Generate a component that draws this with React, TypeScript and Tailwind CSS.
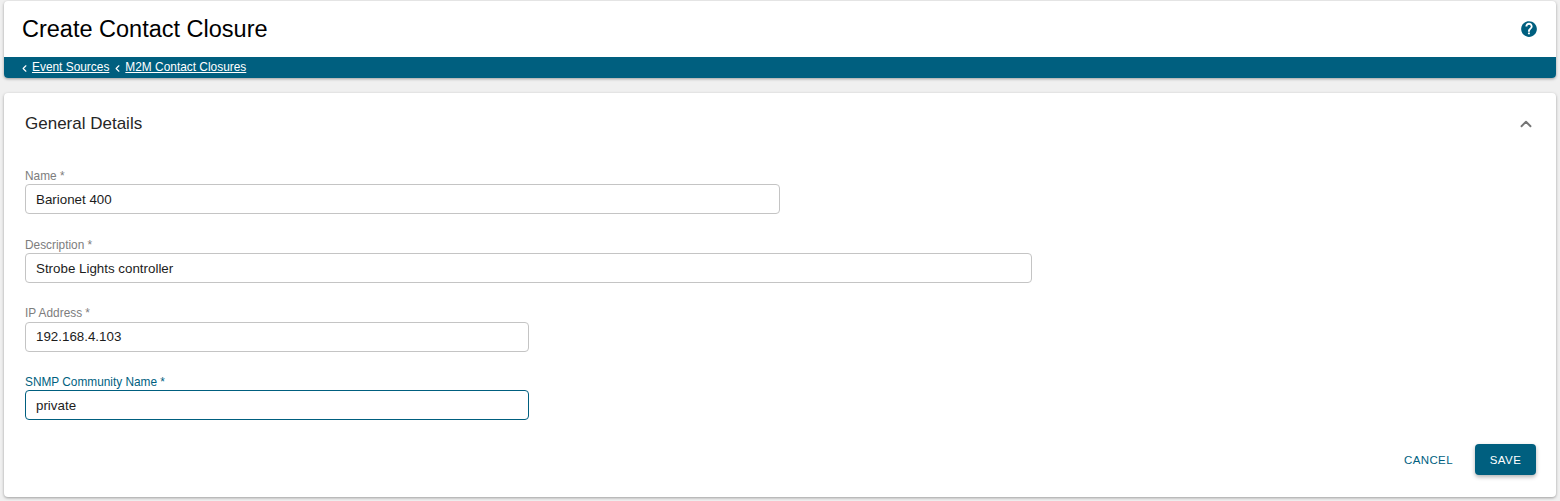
import { ChevronLeft, ChevronUp } from 'lucide-react';

interface FieldProps {
  label: string;
  value: string;
  widthClass: string;
  paddingClass?: string;
  focused?: boolean;
}

function Field({ label, value, widthClass, paddingClass = 'pt-[2px]', focused = false }: FieldProps) {
  return (
    <div className={widthClass}>
      <div className={`h-[15.2px] text-[11.85px] leading-[15px] ${focused ? 'text-[#005f7f]' : 'text-[#7d7d7d]'}`}>
        {label} *
      </div>
      <div
        className={`flex h-[30px] items-center rounded-[4px] border bg-white px-[10px] text-[13.35px] text-[#1c1c1c] ${paddingClass} ${
          focused ? 'border-[#005f7f]' : 'border-[#c4c4c4]'
        }`}
      >
        {value}
      </div>
    </div>
  );
}

export default function App() {
  return (
    <div className="h-[501px] overflow-hidden bg-[#f0f0f0] px-1 pt-px font-['Liberation_Sans',Arial,sans-serif]">
      {/* Header */}
      <header className="overflow-hidden rounded-[4px] bg-white shadow-[0_1px_3px_rgba(0,0,0,0.35)]">
        <div className="flex h-[56px] items-center justify-between px-[18px]">
          <h1 className="text-[23.5px] leading-[54px] text-black">Create Contact Closure</h1>
          <svg width="18" height="18" viewBox="0 0 24 24" fill="#005f7f">
            <path d="M12 1.5C6.2 1.5 1.5 6.2 1.5 12S6.2 22.5 12 22.5 22.5 17.8 22.5 12 17.8 1.5 12 1.5zm1.2 17.6h-2.6v-2.6h2.6v2.6zm2.6-8.1-1.1 1.2c-.9.9-1.5 1.6-1.5 3.3h-2.6v-.6c0-1.2.5-2.3 1.5-3.2l1.6-1.6c.4-.4.7-1 .7-1.6 0-1.2-1-2.2-2.3-2.2S9.8 7.3 9.8 8.5H7.2c0-2.6 2.2-4.8 4.8-4.8s4.8 2.2 4.8 4.8c0 1-.4 1.9-1 2.5z" />
          </svg>
        </div>
        <nav className="flex h-[21px] items-center bg-[#005f7f] pl-[15px] pt-px text-[11.9px] text-white">
          <ChevronLeft size={11} strokeWidth={2.5} />
          <a className="ml-[2px] underline" href="#">Event Sources</a>
          <ChevronLeft size={11} strokeWidth={2.5} className="ml-[3px]" />
          <a className="ml-[2px] underline" href="#">M2M Contact Closures</a>
        </nav>
      </header>

      {/* Form card */}
      <main className="mt-[15px] h-[404px] rounded-[4px] bg-white px-[21px] shadow-[0_1px_3px_rgba(0,0,0,0.35)]">
        <div className="flex h-[61px] items-center justify-between">
          <h2 className="text-[17px] text-[#262626]">General Details</h2>
          <ChevronUp size={18} strokeWidth={2.5} className="text-[#757575]" />
        </div>

        <div className="mt-[14.9px] flex flex-col gap-[23.55px]">
          <Field label="Name" value="Barionet 400" widthClass="w-[755px]" />
          <Field label="Description" value="Strobe Lights controller" widthClass="w-[1007px]" />
          <Field label="IP Address" value="192.168.4.103" widthClass="w-[504px]" paddingClass="pt-[0.5px]" />
          <Field label="SNMP Community Name" value="private" widthClass="w-[504px]" focused />
        </div>

        <div className="mr-[-1px] mt-[24px] flex items-center justify-end gap-[22px]">
          <button className="pt-px text-[11.5px] tracking-[0.4px] text-[#005f7f]">CANCEL</button>
          <button className="h-[31px] w-[61px] rounded-[4px] bg-[#005f7f] pt-px text-[11.5px] tracking-[0.4px] text-white shadow-[0_2px_4px_rgba(0,0,0,0.3)]">
            SAVE
          </button>
        </div>
      </main>
    </div>
  );
}
